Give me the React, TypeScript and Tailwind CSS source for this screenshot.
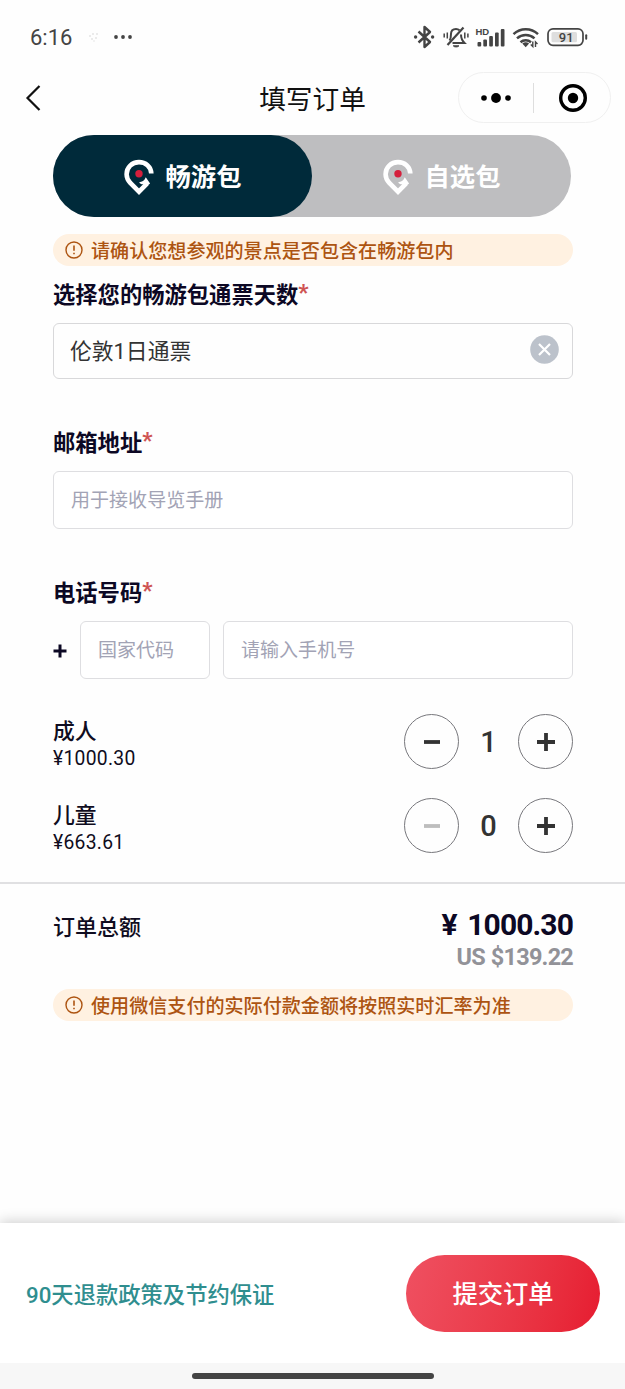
/**
 * Order form for a city sightseeing pass (mini program page).
 *
 * - Pass type tabs, pass duration, contact fields and ticket counts.
 * - Order total follows the ticket counts.
 */
import { useState } from "react";

type PassType = "unlimited" | "select";

const ADULT_PRICE = 1000.3;
const CHILD_PRICE = 663.61;
const CNY_PER_USD = 7.185;

function StatusBar() {
  return (
    <div className="flex h-[72px] items-center pt-[2px] pr-[37px] pl-[30px] text-[#444]">
      <span className="w-[43px] pt-[1px] font-[Roboto] text-[22px] leading-[28px]">6:16</span>
      <svg className="ml-[14px]" width="14" height="14" viewBox="0 0 14 14" fill="#e4e4e4">
        <circle cx="3" cy="6" r="1" /><circle cx="6" cy="4" r="1" /><circle cx="10" cy="4" r="1" />
        <circle cx="5" cy="9" r="1" /><circle cx="9" cy="8" r="1" /><circle cx="7" cy="11" r="0.8" />
      </svg>
      <svg className="ml-[12px]" width="20" height="6" viewBox="0 0 20 6" fill="#444">
        <circle cx="3" cy="3" r="1.9" /><circle cx="10" cy="3" r="1.9" /><circle cx="17" cy="3" r="1.9" />
      </svg>

      {/* bluetooth, muted bell, signal, wifi, battery */}
      <svg className="ml-auto" width="175" height="28" viewBox="413 23 175 28" fill="none" stroke="#444" strokeWidth="2">
        <path d="M418.5 31.5 430 42l-5.500 5V27l5.500 5-11.500 10.500" strokeWidth="2.400" strokeLinejoin="round" />
        <circle cx="415.600" cy="37" r="1.700" fill="#444" stroke="none" />
        <circle cx="432.600" cy="37" r="1.700" fill="#444" stroke="none" />

        <path d="M449.500 40.500c1.500-2 1.500-4 1.500-6.500 0-3 2-5 5-5 1.500 0 2.600.5 3.500 1.300M461 34.500c0 3 .5 5.500 3.500 8.500h-12" />
        <path d="M463.500 27.500 447.500 45" strokeWidth="2.200" />
        <path d="M453.300 45.800h5.600c-.7 1.500-4.900 1.500-5.600 0Z" fill="#444" strokeWidth="1" />
        <path d="M444.200 33.500v4M447.300 32.500v6M464.800 32.500v6M467.900 33.500v4" strokeWidth="1.500" />

        <g fill="#444" stroke="none">
          <text x="475.500" y="34.600" fontSize="9.500" fontWeight="700" fontFamily="Liberation Sans, sans-serif">HD</text>
          <rect x="477.500" y="42" width="3.700" height="4.500" rx="1" />
          <rect x="483.300" y="39.500" width="3.700" height="7" rx="1" />
          <rect x="489.200" y="36" width="3.700" height="10.500" rx="1" />
          <rect x="495" y="32.500" width="3.700" height="14" rx="1" />
          <rect x="500.800" y="29" width="3.700" height="17.500" rx="1" />
        </g>

        <path d="M513.500 34.200c7-6.500 17.500-6.500 24.500 0" strokeWidth="2.500" />
        <path d="M517 38.400c5-4.600 12.500-4.600 17.500 0" strokeWidth="2.500" />
        <path d="M520.500 42.200c3-2.600 7.500-2.600 10.500 0" strokeWidth="2.500" />
        <path d="M522.300 43.600q3.400-2.600 6.800 0l-3.400 3.600Z" fill="#444" stroke="none" />
        <path d="M532.800 41.500v5l-2-2M535.500 47v-5l2 2" strokeWidth="1.400" />

        <rect x="548" y="28.800" width="35" height="16.500" rx="5" strokeWidth="1.700" />
        <rect x="551.500" y="32" width="25.500" height="10.200" rx="1.500" fill="#dedede" stroke="none" />
        <rect x="585.200" y="34.300" width="2" height="5.500" rx="1" fill="#444" stroke="none" />
        <text x="566.200" y="41.700" textAnchor="middle" fontSize="13" fontWeight="500" fill="#444" stroke="none" fontFamily="Roboto, sans-serif">91</text>
      </svg>
    </div>
  );
}

function NavBar() {
  return (
    <div className="flex h-[51px] items-center pr-[14px] pl-[24px]">
      <button type="button" aria-label="返回" className="w-[143px]">
        <svg width="20" height="28" viewBox="0 0 20 28" fill="none" stroke="#111" strokeWidth="2.200">
          <path d="M15.500 2 3.500 14l12 12" />
        </svg>
      </button>
      <h1 className="flex-1 text-center text-[26.7px] leading-[51px] text-[#111]">填写订单</h1>
      <div className="flex h-[51px] w-[153px] items-center rounded-full border border-[#f0f0f0]">
        <button type="button" aria-label="更多" className="flex flex-1 justify-center">
          <svg width="32" height="12" viewBox="0 0 32 12" fill="#000">
            <circle cx="4" cy="6" r="2.800" /><circle cx="16" cy="6" r="4.900" /><circle cx="28" cy="6" r="2.800" />
          </svg>
        </button>
        <span className="h-[30px] w-px bg-[#dedede]" />
        <button type="button" aria-label="关闭" className="flex flex-1 justify-center pl-[3px]">
          <svg width="30" height="30" viewBox="0 0 30 30">
            <circle cx="15" cy="15" r="12.300" fill="none" stroke="#000" strokeWidth="3.400" />
            <circle cx="15" cy="15" r="5.200" />
          </svg>
        </button>
      </div>
    </div>
  );
}

function PinIcon() {
  return (
    <svg className="mt-[2px]" width="30" height="36" viewBox="0 0 30 36" fill="none" stroke="#fff">
      <path d="M27.300 14.500C27 7.500 21.500 3.100 15 3.100 8 3.100 2.600 8.400 2.600 15.200c0 3.500 1.400 6.200 3.700 8.800l8.700 8.700 8-8" strokeWidth="4.600" />
      <path d="m21.800 18.300 4.300 6.300-3 2.400-3.600-1.800c-2 .2-3.500-.5-4.300-2 2.700 0 5.300-1.600 6.600-4.900Z" fill="#fff" stroke="none" />
      <circle cx="15" cy="14.800" r="3.700" fill="#d51f3c" stroke="none" />
    </svg>
  );
}

function Tab({ label, active, onClick }: { label: string; active: boolean; onClick: () => void }) {
  return (
    <button
      type="button"
      onClick={onClick}
      className={`flex h-full flex-1 items-center justify-center gap-[12px] rounded-full text-[25.3px] font-bold text-white ${active ? "bg-[#002a3a]" : ""}`}
    >
      <PinIcon />
      <span className="pb-[2px] leading-[36px]">{label}</span>
    </button>
  );
}

function Notice({ text }: { text: string }) {
  return (
    <div className="flex h-8 items-center gap-[8px] rounded-full bg-[#fff1e1] pl-[12px] text-[#ad5411]">
      <svg width="18" height="18" viewBox="0 0 18 18" fill="none" stroke="#ad5411" strokeWidth="1.400">
        <circle cx="9" cy="9" r="8" />
        <path d="M9 4.500v5.300M9 11.800v1.500" strokeWidth="1.600" />
      </svg>
      <span className="text-[19.08px] leading-[30px] font-medium">{text}</span>
    </div>
  );
}

function FieldLabel({ text }: { text: string }) {
  return (
    <div className="flex h-[30px] items-start text-[22.3px] leading-[30px] font-bold text-[#0c0824]">
      {text}
      <span className="font-[Roboto] text-[22px] leading-[29px] font-black text-[#cf5454]">*</span>
    </div>
  );
}

interface StepperProps {
  label: string;
  price: number;
  value: number;
  onChange: (v: number) => void;
}

function Stepper({ label, price, value, onChange }: StepperProps) {
  const round = "flex h-[55px] w-[55px] items-center justify-center rounded-full border border-[#77777c]";
  return (
    <div className="flex h-[55px] items-center">
      <div className="flex-1 pt-[3px] font-medium text-[#0f0c20]">
        <div className="text-[21.8px] leading-[30px]">{label}</div>
        <div className="pt-[1px] font-[Roboto] text-[19.3px] leading-[26px] font-normal tracking-[0.3px]">¥{price.toFixed(2)}</div>
      </div>
      <button type="button" aria-label={`减少${label}`} disabled={value === 0} onClick={() => onChange(value - 1)} className={round}>
        <svg width="18" height="18" viewBox="0 0 18 18" stroke={value === 0 ? "#bdbdbd" : "#333"} strokeWidth="3.800">
          <path d="M1 9h16" />
        </svg>
      </button>
      <span className="w-[59px] text-center font-[Roboto] text-[29px] leading-[54px] font-medium text-[#333]">{value}</span>
      <button type="button" aria-label={`增加${label}`} onClick={() => onChange(value + 1)} className={round}>
        <svg width="18" height="18" viewBox="0 0 18 18" stroke="#333" strokeWidth="3.800">
          <path d="M0 9h18M9 0v18" />
        </svg>
      </button>
    </div>
  );
}

export default function App() {
  const [passType, setPassType] = useState<PassType>("unlimited");
  const [pass, setPass] = useState("伦敦1日通票");
  const [adults, setAdults] = useState(1);
  const [children, setChildren] = useState(0);

  const total = adults * ADULT_PRICE + children * CHILD_PRICE;
  const input = "h-[58px] rounded-md border border-[#dedee1] bg-white pr-[16px] pb-[3px] pl-[17px] text-[19.05px] outline-none placeholder:text-[#a2a3b5]";

  return (
    <div className="flex h-[1389px] w-[625px] flex-col overflow-hidden bg-[#fefefe] font-[Noto_Sans_CJK_SC,sans-serif]">
      <StatusBar />
      <NavBar />

      <main className="flex-1">
        <div className="mt-[12px] pr-[52px] pl-[53px]">
          <div className="mr-[2px] flex h-[82px] rounded-full bg-[#bebec0]">
            <Tab label="畅游包" active={passType === "unlimited"} onClick={() => setPassType("unlimited")} />
            <Tab label="自选包" active={passType === "select"} onClick={() => setPassType("select")} />
          </div>

          <div className="mt-[17px]">
            <Notice text="请确认您想参观的景点是否包含在畅游包内" />
          </div>

          <div className="mt-[12px]">
            <FieldLabel text="选择您的畅游包通票天数" />
            <div className="mt-[15px] flex h-[56px] items-center justify-between rounded-md border border-[#d8d8da] pr-[13px] pl-[16px]">
              <span className="pt-[2px] font-[Roboto,Noto_Sans_CJK_SC] text-[21.8px] leading-[52px] text-[#333]">{pass}</span>
              <button type="button" aria-label="清除" onClick={() => setPass("")}>
                <svg className="mb-[3px]" width="29" height="29" viewBox="0 0 29 29">
                  <circle cx="14.500" cy="14.500" r="14.300" fill="#bcc2cb" />
                  <path d="m9 9 11 11M20 9 9 20" stroke="#fff" strokeWidth="2.200" />
                </svg>
              </button>
            </div>
          </div>

          <div className="mt-[47px]">
            <FieldLabel text="邮箱地址" />
            <input className={`${input} mt-[15px] block w-full`} placeholder="用于接收导览手册" />
          </div>

          <div className="mt-[47px]">
            <FieldLabel text="电话号码" />
            <div className="mt-[15px] flex items-center">
              <svg className="mt-[2px]" width="14" height="14" viewBox="0 0 14 14" stroke="#0c0824" strokeWidth="3">
                <path d="M.5 7h13M7 .5v13" />
              </svg>
              <input className={`${input} ml-[13px] w-[130px]`} placeholder="国家代码" />
              <input className={`${input} ml-[13px] min-w-0 flex-1`} placeholder="请输入手机号" />
            </div>
          </div>

          <div className="mt-[35px] space-y-[29px]">
            <Stepper label="成人" price={ADULT_PRICE} value={adults} onChange={setAdults} />
            <Stepper label="儿童" price={CHILD_PRICE} value={children} onChange={setChildren} />
          </div>
        </div>

        <div className="mt-[29px] border-t-2 border-[#e0e0e2] pr-[52px] pl-[53px]">
          <div className="flex justify-between pt-[21px]">
            <span className="text-[22px] leading-[40px] font-medium text-[#0f0c20]">订单总额</span>
            <div className="text-right font-[Roboto] font-bold">
              <div className="pt-[1px] text-[30px] leading-[38px] tracking-[-0.9px] text-[#0c0824] [word-spacing:4px]">¥ {total.toFixed(2)}</div>
              <div className="text-[23.5px] leading-[27px] tracking-[-0.8px] text-[#929298] [word-spacing:1px]">US ${(total / CNY_PER_USD).toFixed(2)}</div>
            </div>
          </div>
          <div className="mt-[18px]">
            <Notice text="使用微信支付的实际付款金额将按照实时汇率为准" />
          </div>
        </div>
      </main>

      <footer className="shadow-[0_-2px_12px_rgba(0,0,0,0.18)]">
        <div className="flex h-[140px] items-center justify-between bg-white pr-[25px] pl-[26px]">
          <a href="#refund" className="pt-[4px] font-[Roboto,Noto_Sans_CJK_SC] text-[22.3px] leading-[32px] font-medium text-[#2f8e8f]">90天退款政策及节约保证</a>
          <button type="button" className="h-[77px] w-[194px] rounded-full bg-linear-105 from-[#ef5061] to-[#e61b30] text-[25.3px] font-medium text-white">
            提交订单
          </button>
        </div>
        <div className="flex h-[26px] justify-center bg-[#f7f7f7] pt-[10px]">
          <div className="h-[6px] w-[242px] rounded-full bg-[#444]" />
        </div>
      </footer>
    </div>
  );
}
